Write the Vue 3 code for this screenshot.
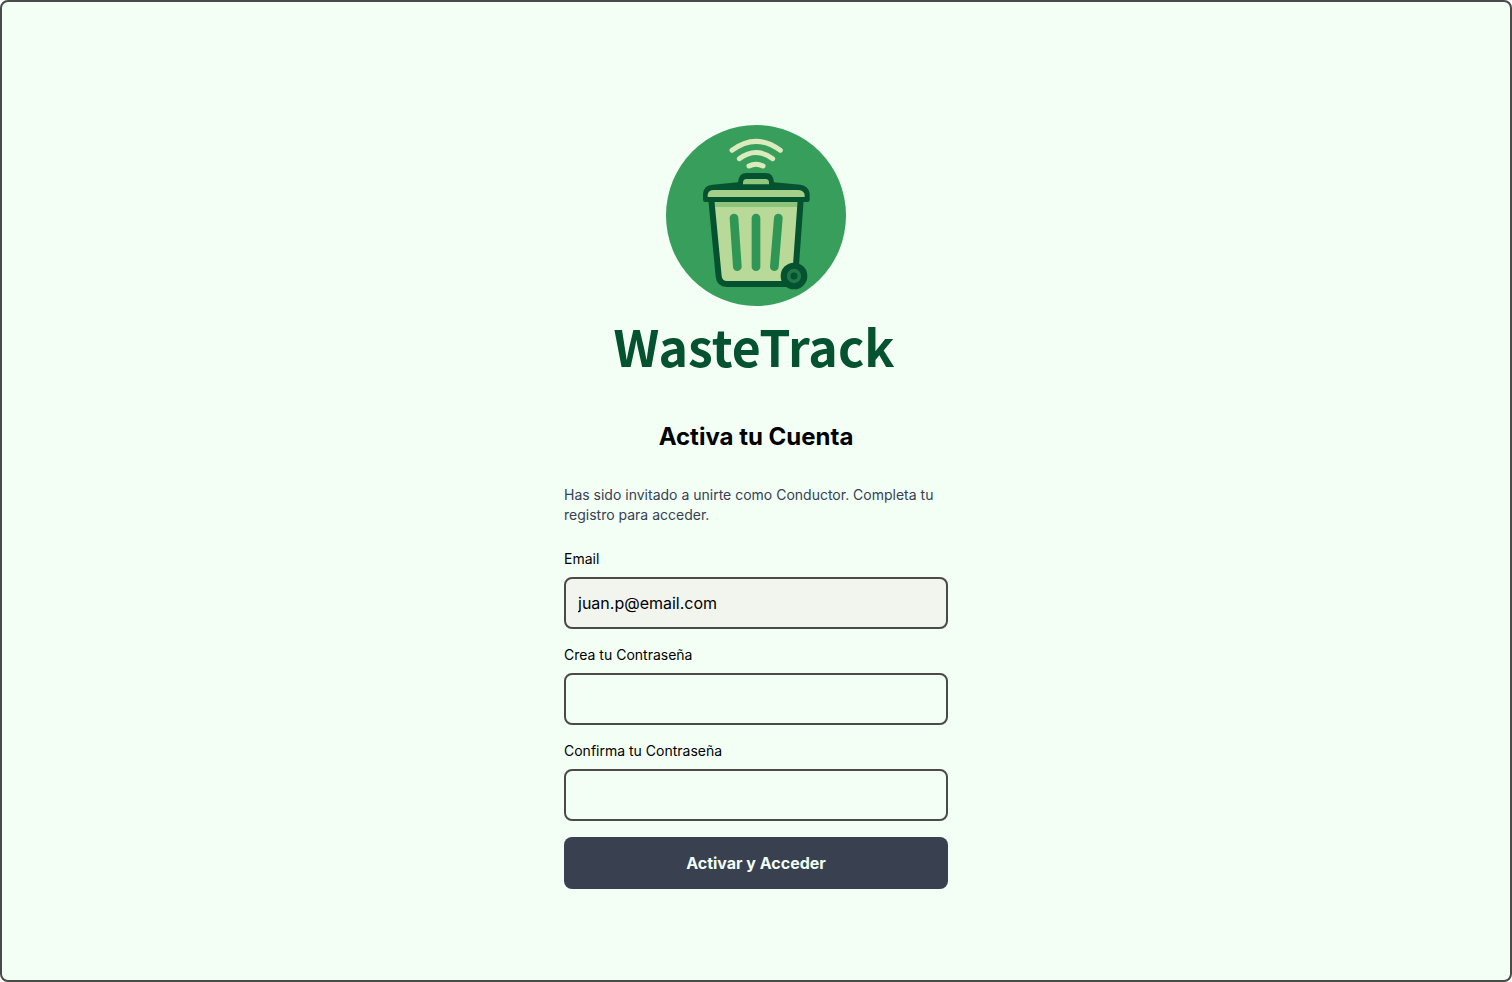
<script setup>
import { ref } from 'vue'

const email = ref('juan.p@email.com')
const password = ref('')
const confirmation = ref('')
</script>

<template>
  <main class="page">
    <section class="panel">
      <div class="brand">
        <svg class="emblem" viewBox="30 30 540 543" aria-hidden="true">
          <ellipse cx="300" cy="301.500" rx="270" ry="271.500" fill="#389e5c" />
          <g fill="none" stroke="#dcebbd" stroke-width="15" stroke-linecap="round">
            <path d="M228 106Q300 52 373 106" />
            <path d="M250 131Q300 94 350 131" />
            <path d="M279 153Q300 142 321 153" />
          </g>
          <path d="M166 255H434L419 458Q415 507 388 507H212Q190 507 188 484Z" fill="#b9d998" />
          <path d="M172 260H430L428 276H174Z" fill="#8dc47b" />
          <path d="M166 255L188 484Q190 507 213 507H392M434 255L420 450" fill="none" stroke="#04522f" stroke-width="18" />
          <g fill="none" stroke="#2f9655" stroke-width="26" stroke-linecap="round">
            <path d="M234 309L244 455" />
            <path d="M300 309V455" />
            <path d="M367 309L355 455" />
          </g>
          <path d="M141 254V236Q143 211 170 209L246 202Q248 174 272 174H329Q352 174 354 202L433 209Q459 213 461 236V254Q461 261 454 261H148Q141 261 141 254Z" fill="#04522f" />
          <path d="M155 246V240Q157 225 173 225H428Q444 226 446 240V246Z" fill="#a3cf88" />
          <path d="M261 208V202Q262 192 272 192H329Q339 193 339 202V208Z" fill="#91c67f" />
          <circle cx="414" cy="483" r="40" fill="#04522f" />
          <circle cx="414" cy="483" r="16" fill="none" stroke="#217748" stroke-width="11" />
        </svg>
        <div class="wordmark">WasteTrack</div>
      </div>

      <h1 class="title">Activa tu Cuenta</h1>
      <p class="intro">Has sido invitado a unirte como Conductor. Completa tu registro para acceder.</p>

      <form class="form" @submit.prevent>
        <div class="field">
          <label for="email">Email</label>
          <input id="email" v-model="email" class="filled" type="email" readonly />
        </div>
        <div class="field">
          <label for="password">Crea tu Contraseña</label>
          <input id="password" v-model="password" type="password" />
        </div>
        <div class="field">
          <label for="confirmation">Confirma tu Contraseña</label>
          <input id="confirmation" v-model="confirmation" type="password" />
        </div>
        <button type="submit">Activar y Acceder</button>
      </form>
    </section>
  </main>
</template>

<style>
body {
  background: #ffffff;
}
</style>

<style scoped>
.page {
  box-sizing: border-box;
  min-height: 100vh;
  display: flex;
  align-items: center;
  justify-content: center;
  border: 2px solid #4a4a4a;
  border-radius: 8px;
  background: #f3fff5;
  color: #000000;
  font-family: Inter, sans-serif;
}

.panel {
  width: 100%;
  max-width: 384px;
}

.brand {
  display: flex;
  flex-direction: column;
  align-items: center;
  padding: 32px 0 44px;
}

.emblem {
  display: block;
  width: 180px;
  height: 181px;
}

.wordmark {
  margin-top: 7px;
  margin-right: 4px;
  color: #04522f;
  font-family: "Noto Sans CJK SC", sans-serif;
  font-size: 50px;
  font-weight: 700;
  line-height: 64px;
}

.title {
  margin: 0 0 32px;
  font-size: 24px;
  font-weight: 700;
  line-height: 32px;
  text-align: center;
}

.intro {
  margin: 0 0 24px;
  color: #364153;
  font-size: 14px;
  line-height: 20px;
}

.form {
  display: flex;
  flex-direction: column;
  gap: 16px;
}

.field {
  display: flex;
  flex-direction: column;
  gap: 8px;
}

label {
  font-size: 14px;
  line-height: 20px;
}

input {
  box-sizing: border-box;
  width: 100%;
  height: 52px;
  padding: 0 12px;
  border: 2px solid #4a4a4a;
  border-radius: 8px;
  background: transparent;
  color: #000000;
  font-family: inherit;
  font-size: 16px;
}

.filled {
  background: #f2f4ee;
}

button {
  height: 52px;
  border: 0;
  border-radius: 8px;
  background: #394150;
  color: #f3fff5;
  font-family: inherit;
  font-size: 16px;
  font-weight: 700;
}
</style>
